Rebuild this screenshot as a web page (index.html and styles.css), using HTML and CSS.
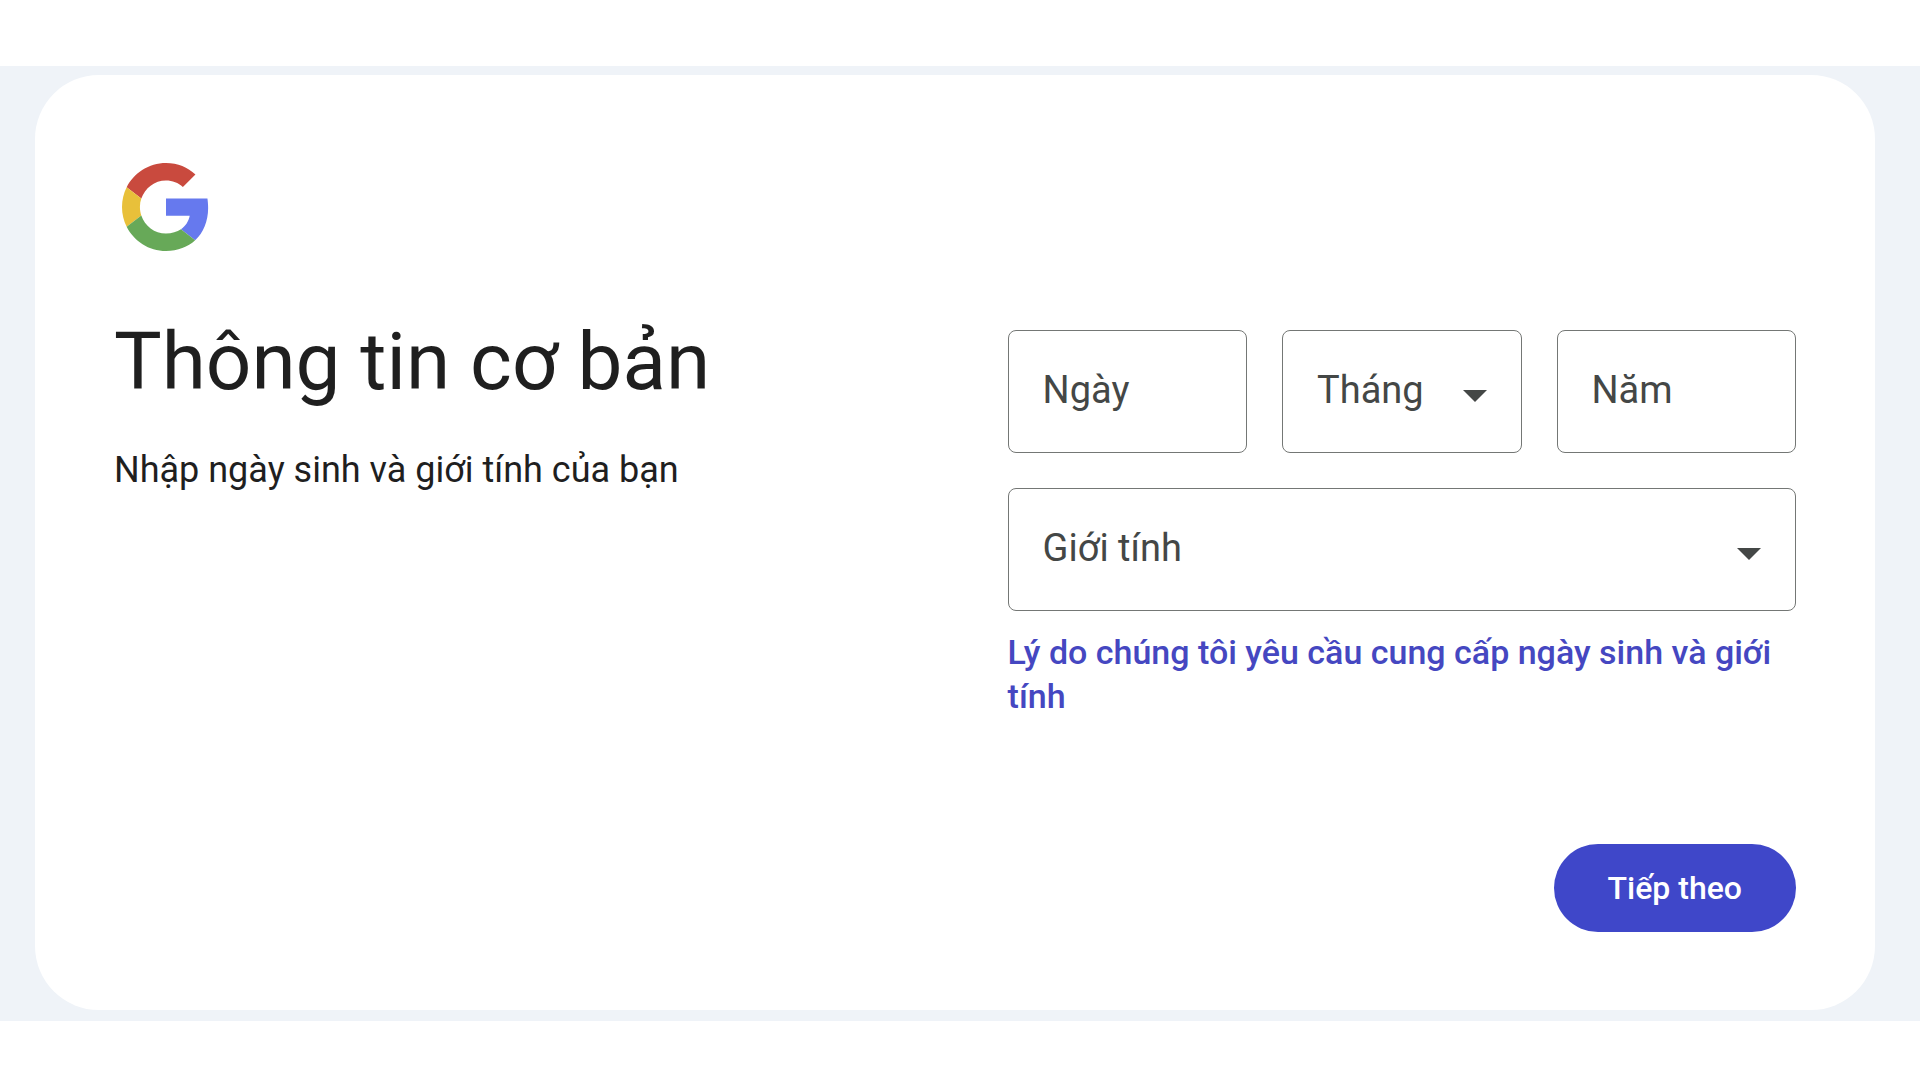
FILE: index.html
```html
<!DOCTYPE html>
<html lang="vi">
<head>
  <meta charset="utf-8">
  <meta name="viewport" content="width=device-width, initial-scale=1">
  <title>Thông tin cơ bản</title>
  <link rel="stylesheet" href="styles.css">
</head>
<body>
  <main class="page">
    <form class="card">
      <svg class="logo" viewBox="0 0 48 48" role="img" aria-label="Google">
        <path fill="#c94a3e" d="M24 9.5c3.54 0 6.71 1.22 9.21 3.6l6.85-6.85C35.9 2.38 30.47 0 24 0 14.62 0 6.51 5.38 2.56 13.22l7.98 6.19C12.43 13.72 17.74 9.5 24 9.5z"/>
        <path fill="#6679ee" d="M46.98 24.55c0-1.57-.15-3.67-.38-5.25H24v9.52h12.94c-.58 2.96-2.26 5.68-4.78 7.38l7.73 6c4.51-4.18 7.09-10.36 7.09-17.65z"/>
        <path fill="#e8c03a" d="M10.53 28.59c-.48-1.45-.76-2.99-.76-4.59s.27-3.14.76-4.59l-7.98-6.19C.92 16.46 0 20.12 0 24c0 3.88.92 7.54 2.56 10.78l7.97-6.19z"/>
        <path fill="#67a958" d="M24 48c6.48 0 11.93-2.13 15.89-5.81l-7.73-6c-2.15 1.45-4.92 2.3-8.16 2.3-6.26 0-11.57-4.22-13.47-9.91l-7.98 6.19C6.51 42.62 14.62 48 24 48z"/>
      </svg>
      <div class="columns">
        <header class="intro">
          <h1 class="title">Thông tin cơ bản</h1>
          <p class="subtitle">Nhập ngày sinh và giới tính của bạn</p>
        </header>
        <div class="fields">
          <div class="birthday">
            <input class="control" type="text" inputmode="numeric" placeholder="Ngày" aria-label="Ngày">
            <div class="dropdown">
              <select class="control" aria-label="Tháng">
                <option>Tháng</option>
              </select>
              <svg class="arrow" viewBox="0 0 24 12" aria-hidden="true"><path d="M0 0h24L12 12z"/></svg>
            </div>
            <input class="control" type="text" inputmode="numeric" placeholder="Năm" aria-label="Năm">
          </div>
          <div class="dropdown">
            <select class="control" aria-label="Giới tính">
              <option>Giới tính</option>
            </select>
            <svg class="arrow" viewBox="0 0 24 12" aria-hidden="true"><path d="M0 0h24L12 12z"/></svg>
          </div>
          <a class="help" href="#">Lý do chúng tôi yêu cầu cung cấp ngày sinh và giới tính</a>
        </div>
      </div>
      <div class="actions">
        <button class="next" type="submit">Tiếp theo</button>
      </div>
    </form>
  </main>
</body>
</html>
```
FILE: styles.css
```css
* {
  box-sizing: border-box;
}

body {
  margin: 0;
  background: #fff;
  color: #1f1f1f;
  font-family: Roboto, "Noto Sans", sans-serif;
}

.page {
  margin-top: 66px;
  padding: 9px 45px 11px 35px;
  background: #eff3f8;
}

.card {
  padding: 88px 79px 78px;
  border-radius: 64px;
  background: #fff;
}

.logo {
  display: block;
  width: 88px;
  height: 88px;
  margin-left: 8px;
}

.columns {
  display: grid;
  grid-template-columns: 17fr 15fr;
  margin-top: 79px;
}

.title {
  margin: 0;
  font-size: 80px;
  font-weight: 400;
  line-height: 64px;
}

.subtitle {
  margin: 52px 0 0;
  font-size: 36px;
  line-height: 48px;
}

.fields {
  display: grid;
  row-gap: 35px;
}

.birthday {
  display: grid;
  grid-template-columns: repeat(3, minmax(0, 1fr));
  column-gap: 35px;
}

.control {
  width: 100%;
  height: 123px;
  padding: 0 34px 4px;
  border: 1px solid #747775;
  border-radius: 8px;
  background: #fff;
  color: #444746;
  font: inherit;
  font-size: 38px;
  appearance: none;
}

.control::placeholder {
  color: #444746;
  opacity: 1;
}

.dropdown {
  display: grid;
  align-items: center;
}

.dropdown > * {
  grid-area: 1 / 1;
}

.arrow {
  justify-self: end;
  width: 24px;
  height: 12px;
  margin: 8px 35px 0 0;
  fill: #444746;
  pointer-events: none;
}

.help {
  margin-top: -16px;
  color: #4547c1;
  font-size: 34px;
  font-weight: 500;
  line-height: 44px;
  text-decoration: none;
}

.actions {
  display: flex;
  justify-content: flex-end;
  margin-top: 126px;
}

.next {
  height: 88px;
  padding: 0 54px;
  border: 0;
  border-radius: 44px;
  background: #3f47c9;
  color: #fff;
  font: inherit;
  font-size: 32px;
  font-weight: 500;
}
```
